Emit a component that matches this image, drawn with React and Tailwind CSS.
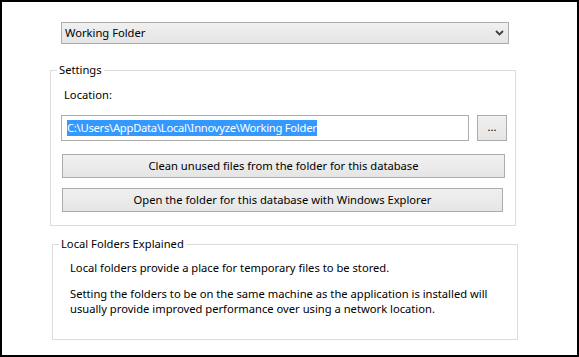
const font = { fontFamily: '"Noto Sans", "Open Sans", sans-serif' }

function Chevron() {
  return (
    <svg width="9" height="6" viewBox="0 0 9 6" className="shrink-0">
      <path d="M1 1 L4.5 4.5 L8 1" fill="none" stroke="#404040" strokeWidth="1.8" />
    </svg>
  )
}

function Button({ className = '', children }) {
  return (
    <div
      className={
        'flex items-center justify-center border border-[#acacac] bg-gradient-to-b from-[#f0f0f0] to-[#e5e5e5] text-black ' +
        className
      }
    >
      {children}
    </div>
  )
}

export default function App() {
  return (
    <div
      className="w-[579px] h-[357px] border-2 border-black bg-white text-[11.2px] leading-[16px] text-black overflow-hidden"
      style={font}
    >
      <div className="ml-[59px] mt-[20px] w-[448px] h-[22px] flex items-center justify-between border border-[#acacac] bg-gradient-to-b from-[#f0f0f0] to-[#e5e5e5] pl-[3px] pr-[4px]">
        <span>Working Folder</span>
        <Chevron />
      </div>

      <fieldset className="ml-[48px] mt-[18px] w-[466px] border border-[#dcdcdc]">
        <legend className="ml-[6px] px-[2px] leading-[16px]">Settings</legend>
        <div className="pl-[10px] pt-[9px] pb-[13px]">
          <div className="ml-[3px] leading-[16px]">Location:</div>
          <div className="flex mt-[12px]">
            <div className="w-[408px] h-[26px] border border-[#acacac] bg-white flex items-center pl-[5px]">
              <span className="bg-[#3399ff] text-white leading-[16px] whitespace-nowrap tracking-[-0.25px]">
                C:\Users\AppData\Local\Innovyze\Working Folder
              </span>
            </div>
            <Button className="ml-[8px] w-[30px] h-[26px] pb-[3px]">...</Button>
          </div>
          <Button className="ml-[1px] mt-[13px] w-[443px] h-[24px]">
            Clean unused files from the folder for this database
          </Button>
          <Button className="ml-[1px] mt-[10px] w-[441px] h-[24px]">
            Open the folder for this database with Windows Explorer
          </Button>
        </div>
      </fieldset>

      <fieldset className="ml-[50px] mt-[10px] w-[466px] border border-[#dcdcdc]">
        <legend className="ml-[6px] px-[2px] leading-[16px]">Local Folders Explained</legend>
        <div className="pl-[17px] pt-[8px] pb-[23px] leading-[15px] whitespace-nowrap">
          <p>Local folders provide a place for temporary files to be stored.</p>
          <p className="mt-[11px]">
            Setting the folders to be on the same machine as the application is installed will
            <br />
            usually provide improved performance over using a network location.
          </p>
        </div>
      </fieldset>
    </div>
  )
}
